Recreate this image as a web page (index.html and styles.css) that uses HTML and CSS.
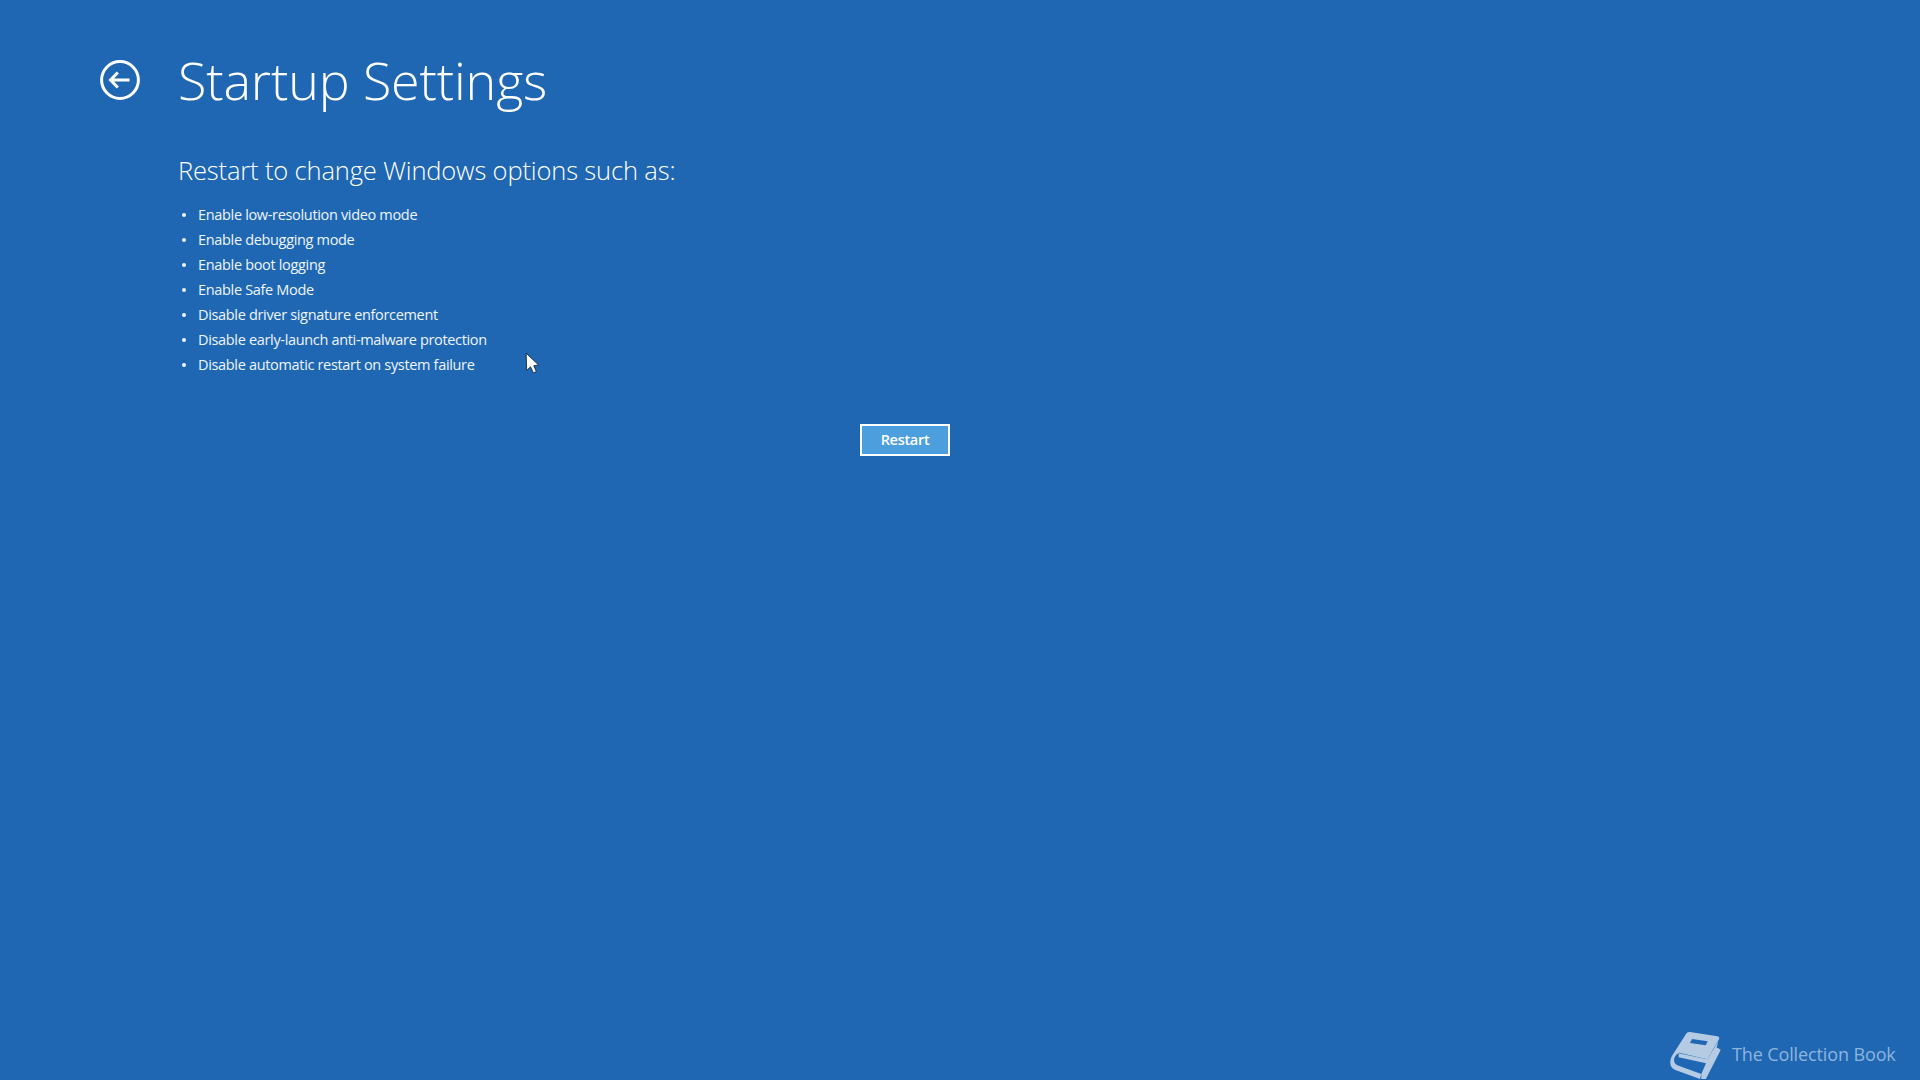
FILE: index.html
```html
<!DOCTYPE html>
<html lang="en">
<head>
<meta charset="utf-8">
<title>Startup Settings</title>
<link rel="stylesheet" href="styles.css">
</head>
<body>
<main class="page">
  <header class="header">
    <svg class="back" viewBox="0 0 40 40" aria-hidden="true">
      <circle cx="20" cy="20" r="18.4" fill="none" stroke="#fff" stroke-width="3"/>
      <path d="M29.500 20H10.500M17.800 12.500L10.500 20L17.800 27.500" fill="none" stroke="#fff" stroke-width="3"/>
    </svg>
    <h1 class="title">Startup Settings</h1>
  </header>
  <section class="content">
    <h2 class="subtitle">Restart to change Windows options such as:</h2>
    <ul class="options">
      <li>Enable low-resolution video mode</li>
      <li>Enable debugging mode</li>
      <li>Enable boot logging</li>
      <li>Enable Safe Mode</li>
      <li>Disable driver signature enforcement</li>
      <li>Disable early-launch anti-malware protection</li>
      <li>Disable automatic restart on system failure</li>
    </ul>
  </section>
  <div class="actions"><button class="restart" type="button">Restart</button></div>
</main>
<svg class="cursor" viewBox="0 0 13 21" aria-hidden="true">
  <path d="M1 1L1.500 16.500L5 13.300L7.500 18.700L10.200 17.500L7.900 12.300L12.200 11.600Z" fill="#fff" stroke="#10253f" stroke-width="0.800"/>
</svg>
<div class="mark">
  <svg class="book" viewBox="0 0 180 165" aria-hidden="true">
    <path d="M78 24L160 37C166 38 167 42 165 46L130 106L46 86C36 90 30 100 30 108C30 116 34 122 44 125L112 150L108 165L34 138C22 133 16 122 20 106C22 98 26 92 30 86L66 30C69 25 73 23 78 24Z" fill="#b4cbe3"/>
    <path d="M44 88L130 106L163 52L158 72L162 72L170 78L126 164C123 167 118 167 112 165L112 150L126 118L44 100Z" fill="#b4cbe3"/>
    <path d="M84 45L131 52L125 64L78 57Z" fill="#1f67b2"/>
  </svg>
  <span class="mark-text">The Collection Book</span>
</div>
</body>
</html>
```

FILE: styles.css
```css
* { box-sizing: border-box; }
html, body { height: 100%; }
body {
  margin: 0;
  background: #1f67b2;
  color: #fff;
  font-family: "Open Sans", "Noto Sans", sans-serif;
  overflow: hidden;
}
.page { padding: 50px 0 0 100px; }
.header { display: flex; align-items: center; height: 60px; }
.back { width: 40px; height: 40px; margin-right: 38px; flex: none; }
.title {
  margin: 0;
  font-size: 52px;
  font-weight: 300;
  line-height: 60px;
  letter-spacing: -0.15px;
  white-space: nowrap;
}
.content { padding: 42px 0 0 78px; }
.subtitle {
  margin: 0;
  font-size: 25.5px;
  font-weight: 300;
  line-height: 36px;
  letter-spacing: -0.15px;
}
.options {
  margin: 14px 0 0;
  padding: 0;
  font-size: 14.5px;
  line-height: 25px;
  list-style: none;
  letter-spacing: -0.33px;
  color: #eef5fb;
}
.options li { display: flex; align-items: center; }
.options li::before {
  content: "";
  flex: none;
  width: 4px;
  height: 4px;
  margin: 0 12.500px 0 3.500px;
  border-radius: 50%;
  background: #eef5fb;
}
.actions { display: flex; padding: 47px 0 0 760px; }
.restart {
  width: 90px;
  height: 32px;
  padding: 0 0 1px;
  border: 2px solid #fff;
  background: #4c9fdc;
  color: #fff;
  font: 600 14.5px "Open Sans", sans-serif;
  letter-spacing: -0.3px;
}
.cursor { position: absolute; left: 525px; top: 351.5px; width: 14.500px; height: 23.500px; }
.mark { position: absolute; left: 1664px; top: 1024px; display: flex; align-items: center; }
.book { width: 60px; height: 55px; margin-right: 8px; flex: none; }
.mark-text { margin-top: 5px; font-size: 18px; color: #8db4dd; letter-spacing: -0.12px; white-space: nowrap; }
```
